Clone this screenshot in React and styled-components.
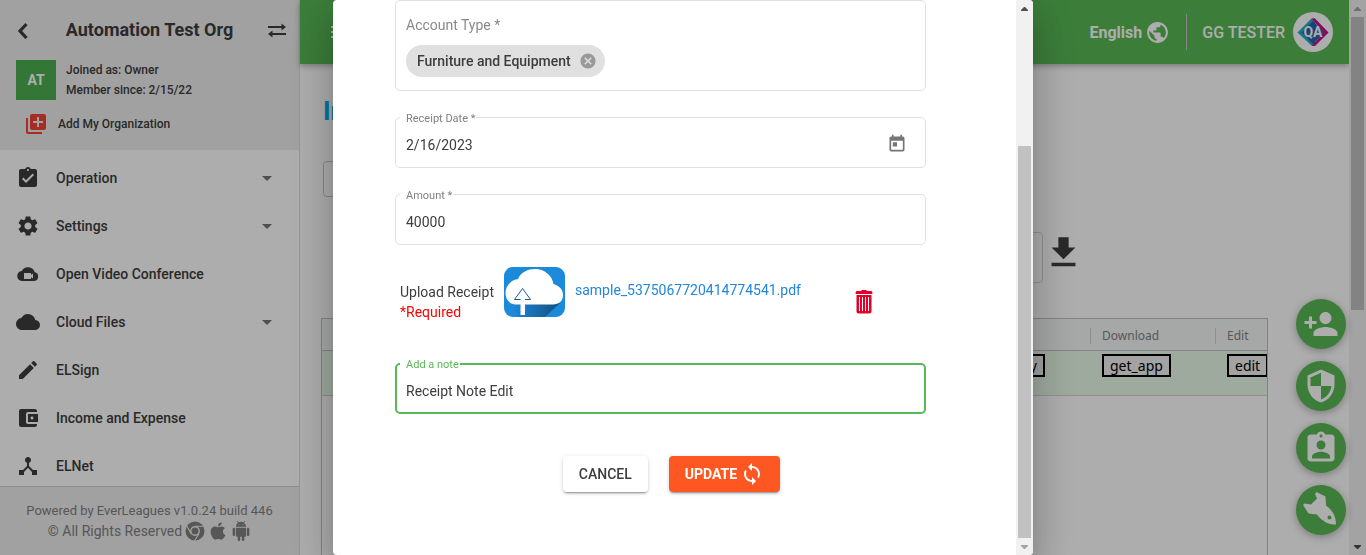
import React from "react";
import styled, { createGlobalStyle } from "styled-components";
import {
  MdAssignmentTurnedIn, MdSettings, MdCloud, MdEdit, MdAccountBalanceWallet, MdDeviceHub,
  MdLibraryAdd, MdToday, MdCancel, MdSync, MdPublic, MdPersonAdd, MdSecurity, MdAssignmentInd,
  MdFileDownload, MdArrowDropDown, MdMenu,
} from "react-icons/md";
import { FaApple } from "react-icons/fa";

const Global = createGlobalStyle`
  * { box-sizing: border-box; }
  body { margin: 0; font-family: Roboto, "Liberation Sans", sans-serif; font-size: 14px; color: #3d3d3d; background: #fff; overflow: hidden; }
  button, input { font: inherit; color: inherit; }
  svg { display: block; flex: none; }
`;

const Page = styled.div`
  display: flex;
  height: 100vh;
`;

/* ---------- side bar ---------- */
const Sidebar = styled.aside`
  display: flex;
  flex-direction: column;
  width: 300px;
  flex: none;
  border-right: 1px solid #dcdcdc;
`;
const OrgPanel = styled.div`
  height: 150px;
  flex: none;
  padding: 15px 12px 0 16px;
  background: #eee;
`;
const OrgBar = styled.div`
  display: flex;
  align-items: center;
  justify-content: space-between;
  height: 30px;
`;
const OrgName = styled.h2`
  margin: 0;
  font-size: 18px;
  line-height: 30px;
  font-weight: 700;
`;
const PlainButton = styled.button`
  display: flex;
  align-items: center;
  padding: 0;
  border: 0;
  background: none;
  cursor: pointer;
  color: ${(p) => p.$color || "inherit"};
`;
const OrgInfo = styled.div`
  display: flex;
  gap: 10px;
  margin-top: 15px;
  font-size: 12px;
  line-height: 20px;
  font-weight: 500;
`;
const Initials = styled.div`
  width: 40px;
  height: 40px;
  line-height: 40px;
  text-align: center;
  font-size: 14px;
  font-weight: 700;
  color: #fff;
  background: #4caf50;
`;
const AddOrg = styled.button`
  display: flex;
  align-items: center;
  gap: 10px;
  height: 24px;
  margin-top: 12px;
  padding: 0 0 0 8px;
  border: 0;
  background: none;
  font-size: 12px;
  font-weight: 500;
  cursor: pointer;
`;
const Nav = styled.nav`
  flex: 1;
  min-height: 0;
  overflow: hidden;
  padding-top: 4px;
`;
const NavItem = styled.a`
  display: flex;
  align-items: center;
  height: 48px;
  padding: 0 20px 0 16px;
  color: #3d3d3d;
  font-size: 14px;
  font-weight: 500;
  text-decoration: none;
  & > span { flex: 1; margin-left: 16px; }
`;
const Footer = styled.footer`
  height: 69px;
  flex: none;
  padding-top: 14px;
  border-top: 1px solid #d0d0d0;
  background: #eee;
  color: #808080;
  font-size: 13px;
  line-height: 20px;
  text-align: center;
`;
const Rights = styled.div`
  display: flex;
  justify-content: center;
  align-items: center;
  gap: 3px;
  height: 20px;
  font-size: 14px;
`;

/* ---------- main area ---------- */
const Main = styled.main`
  flex: 1;
  min-width: 0;
  display: flex;
  flex-direction: column;
`;
const TopBar = styled.header`
  display: flex;
  align-items: center;
  height: 64px;
  flex: none;
  padding: 0 16px 0 28px;
  background: #57b955;
  color: #fff;
  font-size: 16px;
  font-weight: 500;
  box-shadow: 0 2px 6px rgba(0, 0, 0, 0.3);
`;
const Language = styled(PlainButton)`
  gap: 3px;
  margin-left: auto;
  font-weight: 700;
`;
const User = styled.div`
  display: flex;
  align-items: center;
  gap: 8px;
  height: 36px;
  margin-left: 16px;
  padding-left: 15px;
  border-left: 1px solid #c8c8c8;
`;
const Content = styled.div`
  flex: 1;
  min-height: 0;
  display: flex;
  flex-direction: column;
  padding: 32px 81px 0 21px;
`;
const Title = styled.h1`
  margin: 0 0 34px 2px;
  font-size: 26px;
  line-height: 31px;
  color: #03a9f4;
`;
const FilterInput = styled.input`
  width: 200px;
  height: 36px;
  flex: none;
  margin: 0 0 35px 2px;
  border: 1px solid #c8c8c8;
  border-radius: 4px;
  background: none;
`;
const SearchRow = styled.div`
  display: flex;
  align-items: flex-start;
  height: 51px;
  margin: 0 184px 35px 40px;
  flex: none;
`;
const SearchInput = styled.input`
  flex: 1;
  min-width: 0;
  height: 51px;
  border: 1px solid #d6d6d6;
  border-radius: 4px;
  background: none;
`;
const Grid = styled.div`
  flex: 1;
  min-height: 0;
  overflow: hidden;
  border: 1px solid #bdc3c7;
  border-bottom: 0;
`;
const Table = styled.table`
  width: 1018px;
  table-layout: fixed;
  border-collapse: separate;
  border-spacing: 0;
  font-family: "Noto Sans", "Open Sans", sans-serif;
`;
const HeadCell = styled.th`
  width: ${(p) => p.$width || 125}px;
  height: 32px;
  padding: 3px 0 0;
  border-bottom: 1px solid #bdc3c7;
  background: #f5f7f7;
  color: #7d8283;
  font-size: 12px;
  font-weight: 400;
  text-align: left;
  & > span { display: block; padding-left: 11px; border-left: 1px solid #d0d4d6; line-height: 16px; }
`;
const Cell = styled.td`
  height: 45px;
  padding: 3px ${(p) => (p.$end ? 45 : 0)}px 0 12px;
  border-bottom: 1px solid #d0d4d6;
  background: #eafbea;
  vertical-align: top;
  text-align: ${(p) => (p.$end ? "right" : "left")};
`;
const CellButton = styled.button`
  height: 23px;
  padding: 0 6px;
  border: 2px solid #000;
  background: #f0f0f0;
  color: #000;
  font-size: 14px;
  line-height: 18px;
`;
const FabStack = styled.div`
  position: fixed;
  right: 20px;
  bottom: 20px;
  display: flex;
  flex-direction: column;
  gap: 12px;
`;
const Fab = styled.button`
  display: flex;
  align-items: center;
  justify-content: center;
  width: 50px;
  height: 50px;
  padding: 0;
  border: 0;
  border-radius: 50%;
  background: #57b955;
  color: #fff;
  box-shadow: 0 2px 8px rgba(0, 0, 0, 0.3);
`;

/* ---------- scroll bars ---------- */
const Track = styled.div`
  display: flex;
  flex-direction: column;
  width: 17px;
  flex: none;
  padding: 0 2px;
  background: #f1f1f1;
`;
const TrackArrow = styled.div`
  display: flex;
  align-items: center;
  justify-content: center;
  height: 17px;
  flex: none;
  color: ${(p) => (p.$dim ? "#a3a3a3" : "#505050")};
`;
const Thumb = styled.div`
  flex: ${(p) => p.$share};
  background: #c1c1c1;
`;
const Space = styled.div`
  flex: ${(p) => p.$share};
`;

/* ---------- dialog ---------- */
const Overlay = styled.div`
  position: fixed;
  inset: 0;
  display: flex;
  justify-content: center;
  background: rgba(0, 0, 0, 0.32);
`;
const Dialog = styled.div`
  display: flex;
  width: 700px;
  max-width: 100%;
  height: 100%;
  overflow: hidden;
  border-radius: 4px;
  background: #fff;
  box-shadow: 0 11px 15px -7px rgba(0, 0, 0, 0.2), 0 24px 38px 3px rgba(0, 0, 0, 0.14), 0 9px 46px 8px rgba(0, 0, 0, 0.12);
`;
const Form = styled.form`
  flex: 1;
  min-width: 0;
  overflow: hidden;
  padding: 0 90px 0 62px;
`;
const ChipField = styled.div`
  height: 91px;
  padding: 14px 10px 0;
  border: 1px solid #e0e0e0;
  border-radius: 5px;
  color: #8a8a8a;
  line-height: 20px;
`;
const Chip = styled.div`
  display: inline-flex;
  align-items: center;
  gap: 8px;
  height: 32px;
  margin-top: 10px;
  padding: 0 8px 0 11px;
  border-radius: 16px;
  background: #e0e0e0;
  color: #3d3d3d;
  font-weight: 500;
`;
const Field = styled.fieldset`
  height: 58px;
  min-width: 0;
  margin: ${(p) => (p.$active ? 0 : 19)}px 0 0;
  padding: 0 18px 0 ${(p) => (p.$active ? 3 : 4)}px;
  border: ${(p) => (p.$active ? "2px solid #57b955" : "1px solid #e0e0e0")};
  border-radius: 5px;
  color: ${(p) => (p.$active ? "#57b955" : "#808080")};
`;
const Legend = styled.legend`
  padding: 3px 1px 0 6px;
  font-size: 11px;
  line-height: 12px;
`;
const FieldRow = styled.div`
  display: flex;
  align-items: center;
  height: 40px;
  padding-left: 6px;
`;
const Input = styled.input`
  flex: 1;
  min-width: 0;
  padding: 0;
  border: 0;
  outline: 0;
  background: none;
  color: #3d3d3d;
  font-size: 14px;
`;
const CalendarButton = styled(PlainButton)`
  padding-bottom: 3px;
`;
const UploadRow = styled.div`
  display: flex;
  align-items: flex-start;
  height: 89px;
  margin-top: 22px;
  padding: 0 53px 0 5px;
`;
const UploadLabel = styled.div`
  width: 104px;
  padding-top: 15px;
  line-height: 20px;
`;
const Required = styled.div`
  color: #f00;
`;
const FileLink = styled.a`
  flex: 1;
  margin-left: 10px;
  padding-top: 13px;
  line-height: 20px;
  color: #2286dc;
  text-decoration: none;
`;
const DeleteButton = styled(PlainButton)`
  padding-top: 23px;
`;
const Actions = styled.div`
  display: flex;
  justify-content: center;
  gap: 21px;
  margin-top: 42px;
  padding-left: 22px;
`;
const ActionButton = styled.button`
  display: flex;
  align-items: center;
  gap: 3px;
  height: 36px;
  padding: 0 16px;
  border: 0;
  border-radius: 4px;
  background: ${(p) => (p.$primary ? "#ff5722" : "#fff")};
  color: ${(p) => (p.$primary ? "#fff" : "#3d3d3d")};
  font-size: 14px;
  font-weight: ${(p) => (p.$primary ? 700 : 500)};
  box-shadow: 0 3px 1px -2px rgba(0, 0, 0, 0.2), 0 2px 2px 0 rgba(0, 0, 0, 0.14), 0 1px 5px 0 rgba(0, 0, 0, 0.12);
`;

/* ---------- drawings ---------- */
const BackIcon = () => (
  <svg width="16" height="18" viewBox="0 0 16 18">
    <path fill="none" stroke="currentColor" strokeWidth="3.2" d="M10.500 3 4 10l6.500 7" />
  </svg>
);
const SwapIcon = () => (
  <svg width="20" height="16" viewBox="0 0 20 16" fill="currentColor">
    <path d="M1 4h13.500V1.500L19 5l-4.500 3.500V6H1zM19 11H5.500V8.500L1 12l4.500 3.500V13H19z" />
  </svg>
);
const VideoCloudIcon = () => (
  <svg width="24" height="24" viewBox="0 0 24 24">
    <path fill="currentColor" d="M18.700 10.300A7 7 0 0 0 5.700 9 5 5 0 0 0 6.800 19h11A4.400 4.400 0 0 0 18.700 10.300z" />
    <path fill="#fff" d="M8 11h7v2l2-1.500v5L15 15v2H8z" />
  </svg>
);
const ChromeIcon = () => (
  <svg width="20" height="20" viewBox="0 0 20 20">
    <circle cx="10" cy="10" r="9.500" fill="currentColor" />
    <path stroke="#eee" strokeWidth="1.100" fill="none" d="M10 5.300h8.500M14 12.500l-4.500 7.300M6 12.500 1.800 5" />
    <circle cx="10" cy="10" r="4.200" fill="currentColor" stroke="#eee" strokeWidth="1.400" />
  </svg>
);
const AndroidIcon = () => (
  <svg width="20" height="20" viewBox="0 0 24 24" fill="currentColor">
    <path d="M6 18c0 .55.45 1 1 1h1v3.500c0 .83.67 1.500 1.500 1.500s1.500-.67 1.500-1.500V19h2v3.500c0 .83.67 1.500 1.500 1.500s1.500-.67 1.500-1.500V19h1c.55 0 1-.45 1-1V8H6v10zM3.500 8C2.670 8 2 8.670 2 9.500v7c0 .83.67 1.500 1.500 1.500S5 17.330 5 16.500v-7C5 8.670 4.330 8 3.500 8zm17 0c-.83 0-1.500.67-1.500 1.500v7c0 .83.67 1.500 1.500 1.500s1.500-.67 1.500-1.500v-7c0-.83-.67-1.500-1.500-1.500zm-4.970-5.840l1.300-1.300c.2-.2.2-.51 0-.71-.2-.2-.51-.2-.71 0l-1.480 1.480C13.850 1.230 12.950 1 12 1c-.96 0-1.860.23-2.660.63L7.850.15c-.2-.2-.51-.2-.71 0-.2.2-.2.51 0 .71l1.310 1.310C6.970 3.260 6 5.010 6 7h12c0-1.990-.97-3.750-2.470-4.840zM10 5H9V4h1v1zm5 0h-1V4h1v1z" />
  </svg>
);
const RocketIcon = () => (
  <svg width="36" height="36" viewBox="0 0 36 36">
    <path fill="currentColor" d="M13.500 0 22.500 4.500 23 13.500C30 18.500 33 25 33 32.500 25 33 19 29 14 22.500L5.500 21.500 0 13 1.500 11.500 8 12.500 14 6.500 12 2z" />
    <circle cx="26.500" cy="25.500" r="2" fill="#57b955" />
  </svg>
);
const TrashIcon = () => (
  <svg width="18" height="24" viewBox="0 0 18 24">
    <path fill="#e4002b" d="M6.500 0h5v1H16q1.500 0 1.500 3H.500Q.500 1 2 1h4.500zM1.500 5h15v16.500q0 2-2 2h-11q-2 0-2-2z" />
    <path stroke="#fff" strokeWidth="1" d="M4.500 7v14M7.500 7v14M10.500 7v14M13.500 7v14" />
  </svg>
);
const UploadIcon = () => (
  <svg width="61" height="50" viewBox="0 0 61 50">
    <defs>
      <linearGradient id="shade" x1="0" y1="0" x2="1" y2="0">
        <stop offset="0" stopColor="#1c8adb" />
        <stop offset="1" stopColor="#144f80" />
      </linearGradient>
    </defs>
    <rect width="61" height="50" rx="9" fill="#1c8adb" />
    <path fill="url(#shade)" d="M7 36h49L41 50H14z" />
    <path fill="#fff" d="M12 37.500C5 37 1.500 32 1.500 26S6 13 14 12C17 5 24 2 31 2c9 0 17 6 18.500 15C55 19 59 22 59 28s-4 9.500-10 9.500z" />
    <path fill="#fff" stroke="#155a92" strokeWidth="1" d="M18.500 21.500 10.500 32.500h16z" />
    <path fill="#fff" d="M16.500 32h4.500v16h-4.500z" />
  </svg>
);
const AvatarLogo = () => (
  <svg width="40" height="40" viewBox="0 0 40 40">
    <circle cx="20" cy="20" r="20" fill="#fff" />
    <path fill="#29a9c8" d="M18.500 6.500H22v27h-3.500L4.500 20.500z" />
    <path fill="#c4118c" d="M22 6.500l13.500 14L22 34h-3.500l12-13.500-12-14z" />
    <path fill="#2563ac" d="M20 9l11 11.500L20 32 9 20.500z" />
    <text x="20" y="25" textAnchor="middle" fontFamily="Roboto, sans-serif" fontSize="14" fontWeight="700" fill="#fff">QA</text>
  </svg>
);
const Arrow = ({ up }) => (
  <svg width="7" height="4" viewBox="0 0 7 4" fill="currentColor">
    <path d={up ? "M3 0h1l3 3v1H0V3z" : "M0 0h7v1L4 4H3L0 1z"} />
  </svg>
);

const navItems = [
  { label: "Operation", icon: <MdAssignmentTurnedIn size={24} />, menu: true },
  { label: "Settings", icon: <MdSettings size={24} />, menu: true },
  { label: "Open Video Conference", icon: <VideoCloudIcon /> },
  { label: "Cloud Files", icon: <MdCloud size={24} />, menu: true },
  { label: "ELSign", icon: <MdEdit size={24} /> },
  { label: "Income and Expense", icon: <MdAccountBalanceWallet size={24} /> },
  { label: "ELNet", icon: <MdDeviceHub size={24} /> },
];

function TextField({ id, label, value, active, children }) {
  return (
    <Field $active={active}>
      <Legend><label htmlFor={id}>{label}</label></Legend>
      <FieldRow>
        <Input id={id} defaultValue={value} />
        {children}
      </FieldRow>
    </Field>
  );
}

function ScrollTrack({ before, thumb, after, dimUp, dimDown }) {
  return (
    <Track aria-hidden="true">
      <TrackArrow $dim={dimUp}><Arrow up /></TrackArrow>
      {before > 0 && <Space $share={before} />}
      <Thumb $share={thumb} />
      {after > 0 && <Space $share={after} />}
      <TrackArrow $dim={dimDown}><Arrow /></TrackArrow>
    </Track>
  );
}

export default function App() {
  return (
    <>
      <Global />
      <Page>
        <Sidebar>
          <OrgPanel>
            <OrgBar>
              <PlainButton aria-label="Back"><BackIcon /></PlainButton>
              <OrgName>Automation Test Org</OrgName>
              <PlainButton aria-label="Switch organization"><SwapIcon /></PlainButton>
            </OrgBar>
            <OrgInfo>
              <Initials>AT</Initials>
              <div>
                <div>Joined as: Owner</div>
                <div>Member since: 2/15/22</div>
              </div>
            </OrgInfo>
            <AddOrg><MdLibraryAdd size={24} color="#f44336" />Add My Organization</AddOrg>
          </OrgPanel>
          <Nav>
            {navItems.map((item) => (
              <NavItem href="#" key={item.label}>
                {item.icon}
                <span>{item.label}</span>
                {item.menu && <MdArrowDropDown size={24} color="#757575" />}
              </NavItem>
            ))}
          </Nav>
          <Footer>
            <div>Powered by EverLeagues v1.0.24 build 446</div>
            <Rights>
              © All Rights Reserved
              <ChromeIcon />
              <FaApple size={20} />
              <AndroidIcon />
            </Rights>
          </Footer>
        </Sidebar>
        <Main>
          <TopBar>
            <PlainButton aria-label="Menu" $color="#fff"><MdMenu size={24} /></PlainButton>
            <Language $color="#fff">English <MdPublic size={25} /></Language>
            <User>GG TESTER <AvatarLogo /></User>
          </TopBar>
          <Content>
            <Title>Income</Title>
            <FilterInput aria-label="Filter" />
            <SearchRow>
              <SearchInput aria-label="Search" />
              <PlainButton aria-label="Export"><MdFileDownload size={41} /></PlainButton>
            </SearchRow>
            <Grid>
              <Table>
                <thead>
                  <tr>
                    <HeadCell $width={768} />
                    <HeadCell><span>Download</span></HeadCell>
                    <HeadCell><span>Edit</span></HeadCell>
                  </tr>
                </thead>
                <tbody>
                  <tr>
                    <Cell $end><CellButton>history</CellButton></Cell>
                    <Cell><CellButton>get_app</CellButton></Cell>
                    <Cell><CellButton>edit</CellButton></Cell>
                  </tr>
                </tbody>
              </Table>
            </Grid>
          </Content>
          <FabStack>
            <Fab aria-label="Add person"><MdPersonAdd size={36} /></Fab>
            <Fab aria-label="Security"><MdSecurity size={36} /></Fab>
            <Fab aria-label="Assignments"><MdAssignmentInd size={36} /></Fab>
            <Fab aria-label="Launch"><RocketIcon /></Fab>
          </FabStack>
        </Main>
        <ScrollTrack before={0} thumb={293} after={228} dimUp />
      </Page>
      <Overlay>
        <Dialog role="dialog" aria-label="Edit receipt">
          <Form onSubmit={(e) => e.preventDefault()}>
            <ChipField>
              <div>Account Type *</div>
              <Chip>
                Furniture and Equipment
                <PlainButton type="button" aria-label="Remove" $color="#999"><MdCancel size={18} /></PlainButton>
              </Chip>
            </ChipField>
            <TextField id="date" label="Receipt Date *" value="2/16/2023">
              <CalendarButton type="button" aria-label="Open calendar" $color="#757575"><MdToday size={20} /></CalendarButton>
            </TextField>
            <TextField id="amount" label="Amount *" value="40000" />
            <UploadRow>
              <UploadLabel>
                Upload Receipt
                <Required>*Required</Required>
              </UploadLabel>
              <PlainButton type="button" aria-label="Upload receipt"><UploadIcon /></PlainButton>
              <FileLink href="#">sample_5375067720414774541.pdf</FileLink>
              <DeleteButton type="button" aria-label="Delete file"><TrashIcon /></DeleteButton>
            </UploadRow>
            <TextField id="note" label="Add a note" value="Receipt Note Edit" active />
            <Actions>
              <ActionButton type="button">CANCEL</ActionButton>
              <ActionButton type="submit" $primary>UPDATE <MdSync size={24} /></ActionButton>
            </Actions>
          </Form>
          <ScrollTrack before={129} thumb={392} after={0} dimDown />
        </Dialog>
      </Overlay>
    </>
  );
}
